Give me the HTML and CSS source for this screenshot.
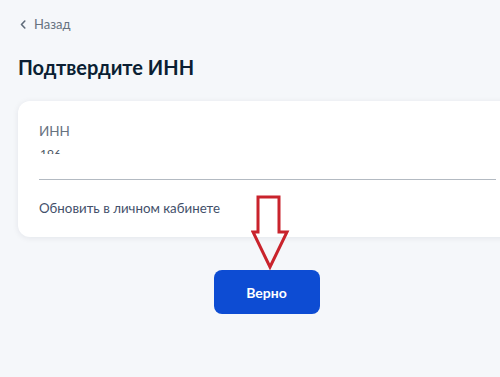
FILE: index.html
```html
<!DOCTYPE html>
<html lang="ru">
<head>
<meta charset="utf-8">
<link rel="stylesheet" href="styles.css">
</head>
<body>
<div class="page">
  <a class="back" href="#">
    <svg class="chev" width="6" height="9" viewBox="0 0 6 9"><path d="M4.8 1 L1.5 4.5 L4.8 8" fill="none" stroke="#5f6b7a" stroke-width="1.6" stroke-linecap="round" stroke-linejoin="round"/></svg>
    <span>Назад</span>
  </a>
  <h1 class="title">Подтвердите ИНН</h1>
  <div class="card">
    <div class="label">ИНН</div>
    <div class="value"><span>196</span></div>
    <div class="divider"></div>
    <a class="link" href="#">Обновить в личном кабинете</a>
  </div>
  <div class="actions">
    <button class="btn">Верно</button>
  </div>
  <svg class="arrow" width="40" height="76" viewBox="0 0 40 76">
    <path d="M7 2 H28 V37 H36 L19 72 L2 37 H7 Z" fill="none" stroke="#c9232c" stroke-width="3" stroke-linejoin="miter"/>
  </svg>
</div>
</body>
</html>
```
FILE: styles.css
```css
html, body {
  margin: 0;
  padding: 0;
  background: #f5f7fa;
  font-family: Lato, "Noto Sans", sans-serif;
}
.page {
  position: relative;
  width: 500px;
  height: 377px;
  overflow: hidden;
  padding: 15px 0 0 18px;
  box-sizing: border-box;
}
.back {
  display: flex;
  align-items: center;
  gap: 8px;
  padding-left: 2px;
  color: #66727f;
  font-size: 13px;
  line-height: 18px;
  text-decoration: none;
}
.title {
  margin: 21px 0 0 0;
  font-size: 20px;
  line-height: 26px;
  font-weight: 700;
  color: #0b1f33;
}
.card {
  margin-top: 21px;
  width: 500px;
  box-sizing: border-box;
  background: #fff;
  border-radius: 12px;
  box-shadow: 0 1px 6px rgba(11, 31, 51, 0.08);
  padding: 21px 22px 20px 21px;
}
.label {
  font-size: 13.5px;
  line-height: 18px;
  color: #66727f;
}
.value {
  height: 6px;
  overflow: hidden;
  margin-top: 8px;
  font-size: 12px;
  line-height: 12px;
  color: #4a5563;
  padding-left: 1px;
}
.divider {
  margin-top: 25px;
  height: 1px;
  background: #b3bac2;
}
.link {
  display: block;
  margin-top: 19px;
  font-size: 13.3px;
  line-height: 18px;
  color: #43506a;
  text-decoration: none;
}
.actions {
  width: 500px;
  display: flex;
  justify-content: center;
  padding-top: 33px;
}
.btn {
  width: 106px;
  height: 44px;
  border: none;
  border-radius: 8px;
  background: #0d4cd3;
  color: #fff;
  font-family: Lato, "Noto Sans", sans-serif;
  font-size: 14px;
  font-weight: 700;
  margin-left: -3px;
}
.arrow {
  position: absolute;
  left: 251px;
  top: 195px;
}
```
